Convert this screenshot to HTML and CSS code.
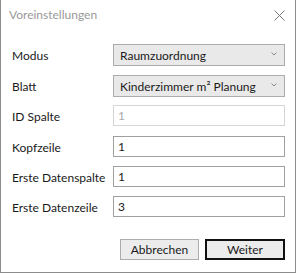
FILE: index.html
```html
<!DOCTYPE html>
<html lang="de">
<head>
    <meta charset="UTF-8">
    <title>Voreinstellungen</title>
    <link rel="stylesheet" href="styles.css">
</head>
<body>
    <div class="dialog">
        <div class="title-bar">
            <span class="title">Voreinstellungen</span>
            <svg class="close-icon" width="11" height="11" viewBox="0 0 11 11">
                <path d="M0.5 0.5 L10.5 10.5 M10.5 0.5 L0.5 10.5" stroke="#7a7a7a" stroke-width="1" fill="none"/>
            </svg>
        </div>

        <div class="form-grid">
            <label class="field-label">Modus</label>
            <div class="select-box">
                <span>Raumzuordnung</span>
                <svg class="chevron" width="6" height="4" viewBox="0 0 6 4"><path d="M0.5 0.5 L3 3 L5.5 0.5" stroke="#8a8a8a" fill="none"/></svg>
            </div>

            <label class="field-label">Blatt</label>
            <div class="select-box">
                <span>Kinderzimmer m² Planung</span>
                <svg class="chevron" width="6" height="4" viewBox="0 0 6 4"><path d="M0.5 0.5 L3 3 L5.5 0.5" stroke="#8a8a8a" fill="none"/></svg>
            </div>

            <label class="field-label">ID Spalte</label>
            <div class="text-box disabled">1</div>

            <label class="field-label">Kopfzeile</label>
            <div class="text-box">1</div>

            <label class="field-label">Erste Datenspalte</label>
            <div class="text-box">1</div>

            <label class="field-label">Erste Datenzeile</label>
            <div class="text-box">3</div>
        </div>

        <div class="button-row">
            <button class="btn">Abbrechen</button>
            <button class="btn btn-default">Weiter</button>
        </div>
    </div>
</body>
</html>
```

FILE: styles.css
```css
body {
    margin: 0;
    font-family: Lato, "Noto Sans", sans-serif;
    font-size: 12px;
    background: white;
}
.dialog {
    box-sizing: border-box;
    width: 296px;
    height: 273px;
    border: 1px solid #8c8c8c;
    border-top: none;
    background: white;
}
.title-bar {
    height: 44px;
    display: flex;
    justify-content: space-between;
    align-items: flex-start;
}
.title {
    margin: 7px 0 0 8px;
    color: #999;
    line-height: 16px;
}
.close-icon {
    margin: 10px 10px 0 0;
}
.form-grid {
    display: grid;
    grid-template-columns: 101px 172px;
    grid-template-rows: 31px 30px 31px 30px 30px 21px;
    padding-left: 11px;
}
.field-label {
    height: 22px;
    display: flex;
    align-items: center;
    color: #1a1a1a;
}
.select-box {
    box-sizing: border-box;
    height: 22px;
    display: flex;
    align-items: center;
    justify-content: space-between;
    padding: 0 7px 0 6px;
    background: #e9e9e9;
    border: 1px solid #acacac;
    color: #1a1a1a;
}
.chevron {
    margin-top: -3px;
}
.text-box {
    box-sizing: border-box;
    height: 21px;
    display: flex;
    align-items: center;
    padding-left: 4px;
    border: 1px solid #a0a0a0;
    color: #1a1a1a;
}
.text-box.disabled {
    border-color: #d6d6d6;
    color: #a8a8a8;
}
.button-row {
    display: flex;
    justify-content: flex-end;
    gap: 6px;
    margin-top: 22px;
    padding-right: 10px;
}
.btn {
    box-sizing: border-box;
    width: 79px;
    height: 21px;
    padding: 0;
    background: #ececec;
    border: 1px solid #adadad;
    font-family: inherit;
    font-size: 12px;
    color: #1a1a1a;
}
.btn-default {
    width: 80px;
    border: 2px solid #111;
}
```
